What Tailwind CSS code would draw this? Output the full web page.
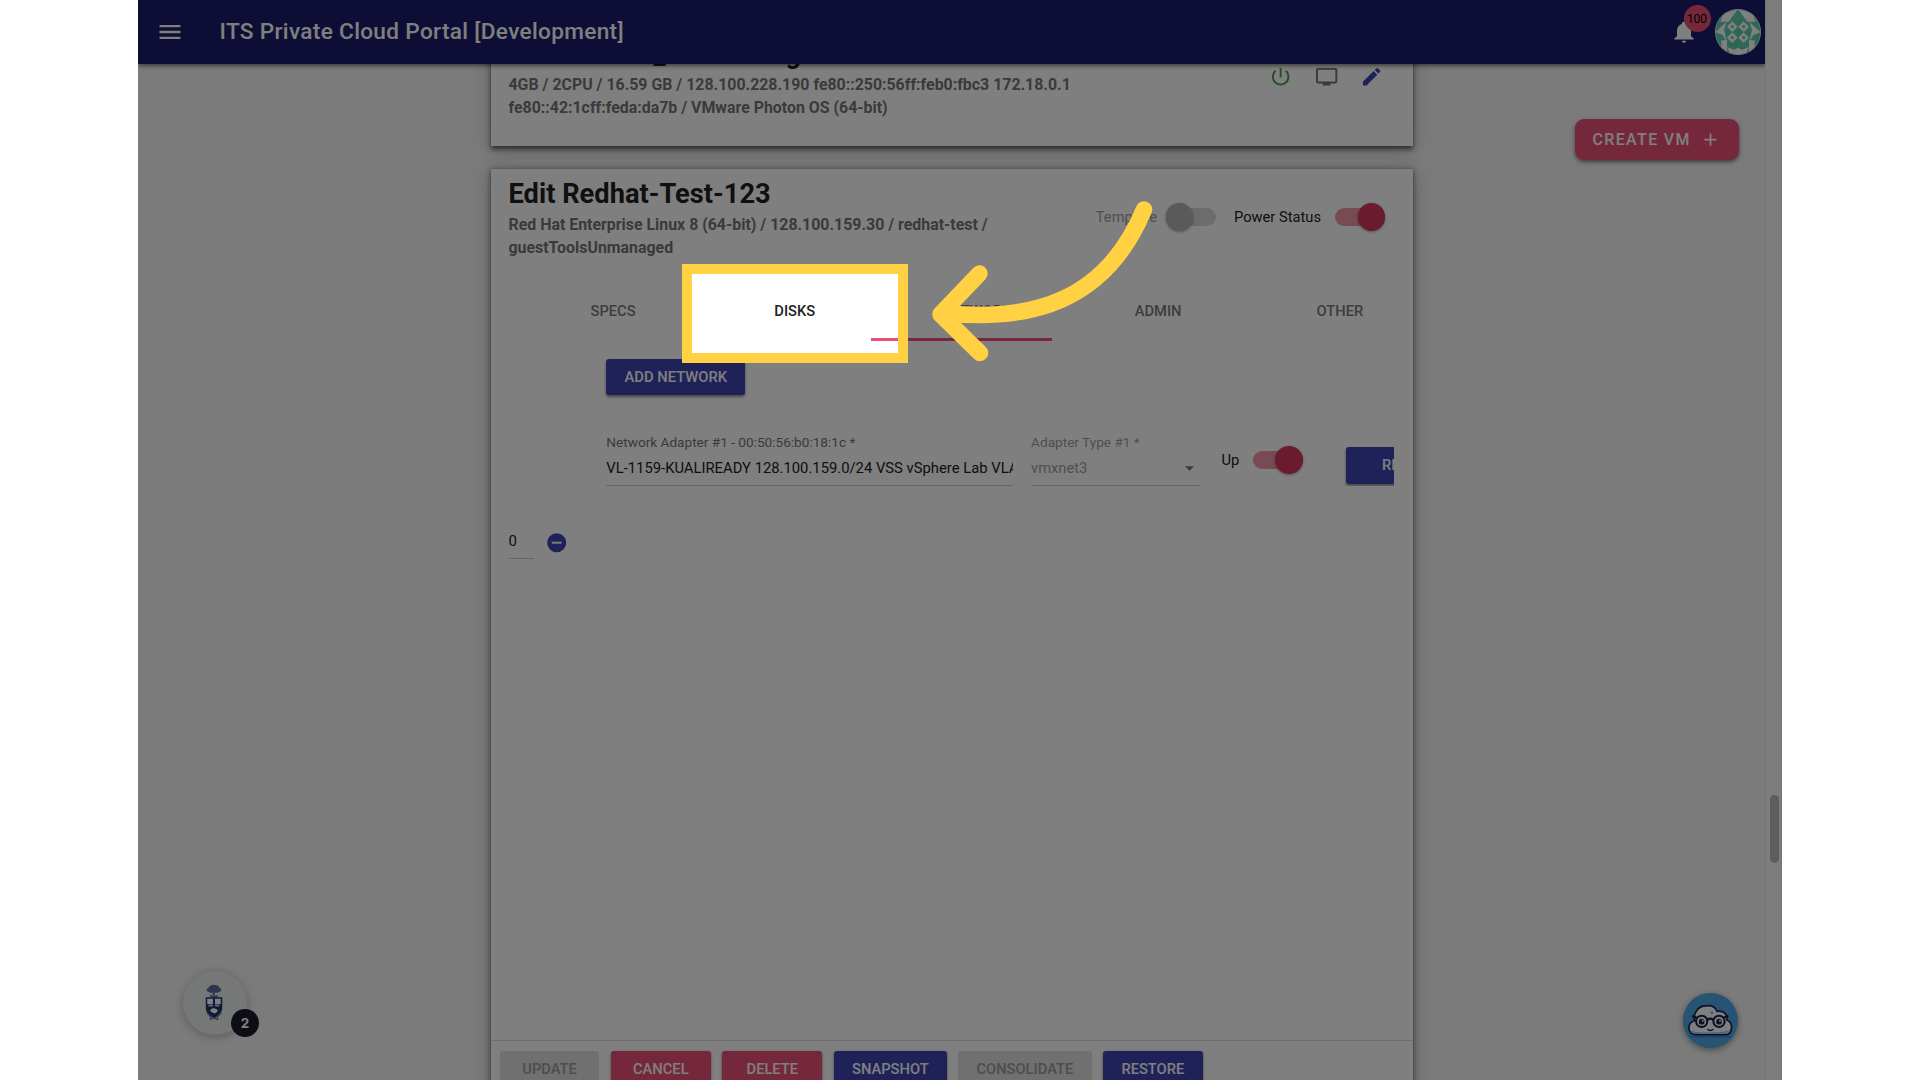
<!DOCTYPE html>
<html lang="en">
<head>
    <meta charset="UTF-8">
    <meta name="viewport" content="width=device-width, initial-scale=1.0">
    <title>ITS Private Cloud Portal</title>
    <script src="https://cdn.jsdelivr.net/npm/@tailwindcss/browser@4"></script>
</head>
<body class="bg-white overflow-hidden font-[Roboto,sans-serif] text-[#212121]">
<div class="relative ml-[138px] w-[1644px] h-[1080px] overflow-hidden bg-[#f6f6f6] flex">
    <div class="w-[1627px] flex flex-col">
        <header class="relative z-10 shrink-0 h-[63.5px] bg-[#1a1b6b] shadow-[0_2px_4px_rgba(0,0,0,0.5)] flex items-center pl-[17.5px] pr-[4px] text-white">
            <svg class="w-7 h-7" viewBox="0 0 24 24" fill="currentColor"><path d="M3 18h18v-2H3v2zm0-5h18v-2H3v2zm0-7v2h18V6H3z"/></svg>
            <h1 class="ml-[36px] text-[22.6px] font-medium tracking-[0.33px] leading-8 mt-px">ITS Private Cloud Portal [Development]</h1>
            <div class="relative ml-auto mr-[18.5px]">
                <svg class="w-[26px] h-[26px] mt-px" viewBox="0 0 24 24" fill="currentColor"><path d="M12 22c1.1 0 2-.9 2-2h-4c0 1.1.9 2 2 2zm6.5-6v-5c0-3.07-1.64-5.64-4.5-6.32V4c0-.83-.67-1.500-1.500-1.500h-1c-.83 0-1.500.67-1.500 1.500v.68C7.130 5.360 5.500 7.920 5.500 11v5L3 18v1h18v-1l-2.500-2z"/></svg>
                <span class="absolute left-[13px] -top-[13px] w-[27px] h-[27px] rounded-full bg-[#ea5078] text-black text-[12px] flex items-center justify-center">100</span>
            </div>
            <svg class="w-[46px] h-[46px]" viewBox="465 26 138 138">
                <clipPath id="avatar"><circle cx="534" cy="95" r="67"/></clipPath>
                <circle cx="534" cy="95" r="69" fill="#fff"/>
                <g clip-path="url(#avatar)">
                    <rect x="465" y="26" width="138" height="138" fill="#5cceaa"/>
                    <g fill="#fff">
                        <path d="M490 40L534 26 506 64H481ZM578 40L534 26 562 64H587Z"/>
                        <path d="M466 96L500 64 492 88 501 126 488 104ZM602 96L568 64 576 88 567 126 580 104Z"/>
                        <path d="M484 120H501V156L484 146ZM584 120H567V156L584 146Z"/>
                        <path d="M501 140L522 148 534 142 546 148 567 140 556 164H512Z"/>
                    </g>
                    <g fill="none" stroke="#fff" stroke-width="7">
                        <path d="M517 68L528 79 517 90 506 79ZM551 68L562 79 551 90 540 79ZM517 101L528 112 517 123 506 112ZM551 101L562 112 551 123 540 112Z"/>
                    </g>
                </g>
            </svg>
        </header>

        <div class="flex">
            <main class="ml-[352.5px] w-[922px] shrink-0">
                <section class="-mt-[26.5px] h-[109.3px] bg-white shadow-[0_3px_5px_0_rgba(0,0,0,0.6),0_4px_18px_rgba(0,0,0,0.22)] flex pl-[18px] pr-[29.3px]">
                    <div class="w-[600px] pt-px">
                        <h2 class="pl-[145px] text-[27.2px] leading-8 font-bold flex gap-[120px]"><span>_</span><span>g</span></h2>
                        <p class="mt-[4.2px] text-[15.9px] leading-[22.7px] font-bold text-[#757575]">4GB / 2CPU / 16.59 GB / 128.100.228.190 fe80::250:56ff:feb0:fbc3 172.18.0.1<br>fe80::42:1cff:feda:da7b / VMware Photon OS (64-bit)</p>
                    </div>
                    <div class="ml-auto mt-[27.8px] flex gap-[22.1px]">
                        <svg class="w-[23.3px] h-[23.3px]" viewBox="0 0 24 24" fill="#4b9a46"><path d="M13 3h-2v10h2V3zm4.830 2.170l-1.420 1.420C17.990 7.860 19 9.810 19 12c0 3.870-3.130 7-7 7s-7-3.130-7-7c0-2.190 1.010-4.140 2.580-5.420L6.170 5.170C4.230 6.820 3 9.260 3 12c0 4.970 4.030 9 9 9s9-4.030 9-9c0-2.740-1.230-5.180-3.170-6.830z"/></svg>
                        <svg class="w-[23.3px] h-[23.3px]" viewBox="0 0 24 24" fill="#757575"><path d="M21 3H3c-1.100 0-2 .9-2 2v12c0 1.100.9 2 2 2h5v2h8v-2h5c1.100 0 1.990-.9 1.990-2L23 5c0-1.100-.9-2-2-2zm0 14H3V5h18v12z"/></svg>
                        <svg class="w-[23.3px] h-[23.3px]" viewBox="0 0 24 24" fill="#3f45b2"><path d="M3 17.250V21h3.750L17.810 9.940l-3.750-3.750L3 17.250zM20.710 7.040c.39-.39.39-1.020 0-1.410l-2.340-2.340c-.39-.39-1.020-.39-1.410 0l-1.830 1.830 3.750 3.750 1.830-1.830z"/></svg>
                    </div>
                </section>

                <section class="mt-[22.7px] h-[926px] bg-white overflow-hidden shadow-[0_1px_6px_rgba(0,0,0,0.55),0_4px_20px_rgba(0,0,0,0.22)] flex flex-col">
                    <div class="pl-[18px] pr-[27.5px] pt-[9.4px] flex h-[90px]">
                        <div class="w-[520px]">
                            <h2 class="text-[27.2px] leading-8 font-bold tracking-[0.03px]">Edit Redhat-Test-123</h2>
                            <p class="mt-[4.1px] text-[15.9px] leading-[22.7px] font-bold text-[#757575]">Red Hat Enterprise Linux 8 (64-bit) / 128.100.159.30 / redhat-test /<br>guestToolsUnmanaged</p>
                        </div>
                        <div class="ml-auto mt-[24.4px] h-7 flex items-center text-[14.7px] leading-5">
                            <span class="w-[69.7px] text-[#9e9e9e]">Template</span>
                            <span class="w-[50px] h-[18px] rounded-full bg-[#d9d9d9] flex items-center">
                                <span class="w-[27.5px] h-[27.5px] rounded-full bg-[#b5b5b5] shadow-[0_1px_3px_rgba(0,0,0,0.35)]"></span>
                            </span>
                            <span class="ml-[18.5px] w-[101px]">Power Status</span>
                            <span class="w-[50px] h-[18px] rounded-full bg-[#f095a7] flex items-center justify-end">
                                <span class="w-[27.5px] h-[27.5px] rounded-full bg-[#d4365c] shadow-[0_1px_3px_rgba(0,0,0,0.35)]"></span>
                            </span>
                        </div>
                    </div>

                    <nav class="relative mt-[22px] ml-[31.7px] w-[908.5px] h-[60px] shrink-0 grid grid-cols-5 items-center text-center text-[14.7px] leading-5 font-medium text-[#7a7a7a]">
                        <span>SPECS</span>
                        <span class="text-[#212121]">DISKS</span>
                        <span>NETWORK</span>
                        <span>ADMIN</span>
                        <span>OTHER</span>
                        <span class="absolute left-[348.5px] bottom-0 w-[181.7px] h-[2.5px] bg-[#ea5078]"></span>
                    </nav>

                    <button class="mt-[17.7px] ml-[115.8px] w-[139px] h-[36.6px] shrink-0 rounded-[3px] bg-[#3f45b2] text-white text-[14.75px] font-medium shadow-[0_2px_3px_rgba(0,0,0,0.45)]">ADD NETWORK</button>

                    <div class="mt-[38px] ml-[115.8px] mr-[18.5px] flex overflow-hidden shrink-0 h-[53px]">
                        <label class="w-[406.5px] shrink-0 border-b border-[#cfcfcf] overflow-hidden whitespace-nowrap">
                            <span class="block text-[13.62px] leading-[18px] text-[#757575]">Network Adapter #1 - 00:50:56:b0:18:1c *</span>
                            <span class="block mt-[4.700px] text-[14.8px] leading-6 text-[#212121]">VL-1159-KUALIREADY 128.100.159.0/24 VSS vSphere Lab VLAN</span>
                        </label>
                        <label class="ml-[18.3px] w-[170px] shrink-0 border-b border-[#cfcfcf] text-[#9e9e9e]">
                            <span class="block text-[13.62px] leading-[18px]">Adapter Type #1 *</span>
                            <span class="mt-[4.700px] text-[14.7px] leading-6 flex items-center justify-between pr-[7px]">vmxnet3
                                <svg class="w-[9px] h-[5px] mt-0.5" viewBox="0 0 10 5" fill="#757575"><path d="M0 0h10L5 5z"/></svg>
                            </span>
                        </label>
                        <div class="ml-[20.5px] mt-[12.5px] h-7 flex items-center text-[14.7px] leading-5 shrink-0">
                            <span class="w-[31px]">Up</span>
                            <span class="w-[50px] h-[18px] rounded-full bg-[#f095a7] flex items-center justify-end">
                                <span class="w-[27.5px] h-[27.5px] rounded-full bg-[#d4365c] shadow-[0_1px_3px_rgba(0,0,0,0.35)]"></span>
                            </span>
                        </div>
                        <button class="ml-[43.3px] mt-[14px] w-[139px] h-[36.5px] shrink-0 rounded-[3px] bg-[#3f45b2] text-white text-[14.7px] font-medium text-left pl-[36px] shadow-[0_2px_3px_rgba(0,0,0,0.45)]">REMOVE</button>
                    </div>

                    <div class="mt-[45px] pl-[18px] flex">
                        <span class="w-[25px] h-[27.5px] border-b border-[#cfcfcf] text-[15px] leading-5">0</span>
                        <svg class="ml-[11.6px] w-[23.4px] h-[23.4px]" viewBox="0 0 24 24"><circle cx="12" cy="12" r="9.8" fill="#3f45b2"/><path d="M7 12h10" stroke="#fff" stroke-width="2"/></svg>
                    </div>

                    <footer class="mt-auto h-[54.7px] shrink-0 border-t border-[#dcdcdc] pt-[9.8px] pl-[9.2px] flex items-start gap-[11.2px] text-[14.7px] font-medium text-white">
                        <button class="w-[99.8px] h-9 rounded-[3px] bg-[#e0e0e0] text-[#9b9b9b]">UPDATE</button>
                        <button class="w-[100.3px] h-9 rounded-[3px] bg-[#ea5078] shadow-[0_1px_3px_rgba(0,0,0,0.45)]">CANCEL</button>
                        <button class="w-[100.3px] h-9 rounded-[3px] bg-[#ea5078] shadow-[0_1px_3px_rgba(0,0,0,0.45)]">DELETE</button>
                        <button class="w-[113.4px] h-9 rounded-[3px] bg-[#3f45b2] shadow-[0_1px_3px_rgba(0,0,0,0.45)]">SNAPSHOT</button>
                        <button class="w-[133.3px] h-9 rounded-[3px] bg-[#e0e0e0] text-[#9b9b9b]">CONSOLIDATE</button>
                        <button class="w-[100.3px] h-9 rounded-[3px] bg-[#3f45b2] shadow-[0_1px_3px_rgba(0,0,0,0.45)]">RESTORE</button>
                    </footer>
                </section>
            </main>

            <aside class="ml-auto mr-[26px] mt-[55.7px]">
                <button class="w-[164px] h-[41px] rounded-[9px] bg-[#ea5078] shadow-[0_2px_4px_rgba(0,0,0,0.5)] text-white text-[16px] font-medium tracking-[1.34px] flex items-center pl-[17.5px]">
                    CREATE VM
                    <svg class="ml-[9px] w-[21px] h-[21px]" viewBox="0 0 24 24" fill="currentColor"><path d="M19 13h-6v6h-2v-6H5v-2h6V5h2v6h6v2z"/></svg>
                </button>
            </aside>
        </div>
    </div>

    <!-- page scrollbar -->
    <div class="relative z-20 w-[17px] h-full bg-[#fafafa] border-x border-[#e6e6e6]">
        <div class="ml-[4px] mt-[795px] w-[9px] h-[68px] rounded-full bg-[#bababa]"></div>
    </div>

    <!-- floating launchers -->
    <div class="absolute left-[45px] top-[970.7px] w-16 h-16 rounded-full bg-[#eaf0ed] shadow-[0_2px_10px_rgba(0,0,0,0.25)] flex items-center justify-center">
        <svg class="w-[18px] h-[36px] mr-0.5" viewBox="0 0 36 72">
            <g fill="#5a6b9f">
                <path d="M8 14c-5-1-7-6-1-8 1-5 6-6 11-6s10 1 11 6c6 2 4 7-1 8-4 3-8 1-9 1l1 5h-5l1-5c-2 1-6 1-8-1z"/>
                <path d="M9 19l4 2h10l4-2-3 6H12z"/>
            </g>
            <path d="M3 26h30v20c0 9-7 15-15 19C10 61 3 55 3 46z" fill="#fff" stroke="#22356f" stroke-width="3"/>
            <path d="M4 38h28v9c0 7-6 13-14 17C10 60 4 54 4 47z" fill="#1c2f6e"/>
            <path d="M16 27h4v11h-4z" fill="#1c2f6e"/>
            <path d="M10 50l6-4 7 2 3 4-6 5-8-3z" fill="#fff"/>
            <path d="M7 39h9v4H7zM20 39h9v4h-9z" fill="#c9d2ec"/>
            <path d="M4 56l7 7v6l7-3 7 3v-6l7-7" fill="none" stroke="#6d7dac" stroke-width="2.5"/>
        </svg>
    </div>
    <div class="absolute left-[93px] top-[1009px] w-7 h-7 rounded-full bg-[#191b2b] text-white font-[Inter,sans-serif] font-bold text-[13.5px] flex items-center justify-center">2</div>
    <div class="absolute left-[1545px] top-[993px] w-[55px] h-[55px] rounded-full bg-[#50a8e8] shadow-[0_2px_6px_rgba(0,0,0,0.4)]">
        <svg class="w-[55px] h-[55px]" viewBox="70 69 165 165">
            <path d="M90 200h124" stroke="#3a8be0" stroke-width="5"/>
            <path d="M108 194C84 194 80 160 104 152 100 128 118 106 140 108 158 104 170 114 172 124 190 120 204 132 202 150 222 158 220 194 196 194Z" fill="#fff" stroke="#16204a" stroke-width="5"/>
            <path d="M96 184C104 192 196 192 210 182" fill="none" stroke="#8ccbf8" stroke-width="4"/>
            <path d="M97 138L110 142M206 138L194 142M143 149Q152 143 161 149" stroke="#16204a" stroke-width="7" fill="none"/>
            <circle cx="126" cy="154" r="17" fill="#fff" stroke="#16204a" stroke-width="6"/>
            <circle cx="178" cy="154" r="17" fill="#fff" stroke="#16204a" stroke-width="6"/>
            <circle cx="126" cy="155" r="8.5" fill="#16204a"/><circle cx="129" cy="152" r="3" fill="#fff"/>
            <circle cx="178" cy="155" r="8.5" fill="#16204a"/><circle cx="181" cy="152" r="3" fill="#fff"/>
            <path d="M143 177Q152 186 161 177" fill="none" stroke="#16204a" stroke-width="4"/>
            <path d="M157 123v11M151.500 128.500h11" stroke="#4fb2f5" stroke-width="3"/>
        </svg>
    </div>

    <!-- dimmed backdrop with the highlighted tab left clear -->
    <div class="absolute z-30 left-[544px] top-[264px] w-[226px] h-[99px] border-[10px] border-[#ffd143] shadow-[0_0_0_2000px_rgba(0,0,0,0.5)]"></div>
    <svg class="absolute z-30 left-[780px] top-[190px] w-[250px] h-[180px]" viewBox="918 190 250 180" fill="none" stroke="#ffd143" stroke-width="16.5" stroke-linecap="round" stroke-linejoin="round">
        <path d="M1144 209.500C1105 303 1030 321 948 313.500"/>
        <path d="M979.500 273.500L940.500 314.300 980 353"/>
    </svg>
</div>
</body>
</html>
